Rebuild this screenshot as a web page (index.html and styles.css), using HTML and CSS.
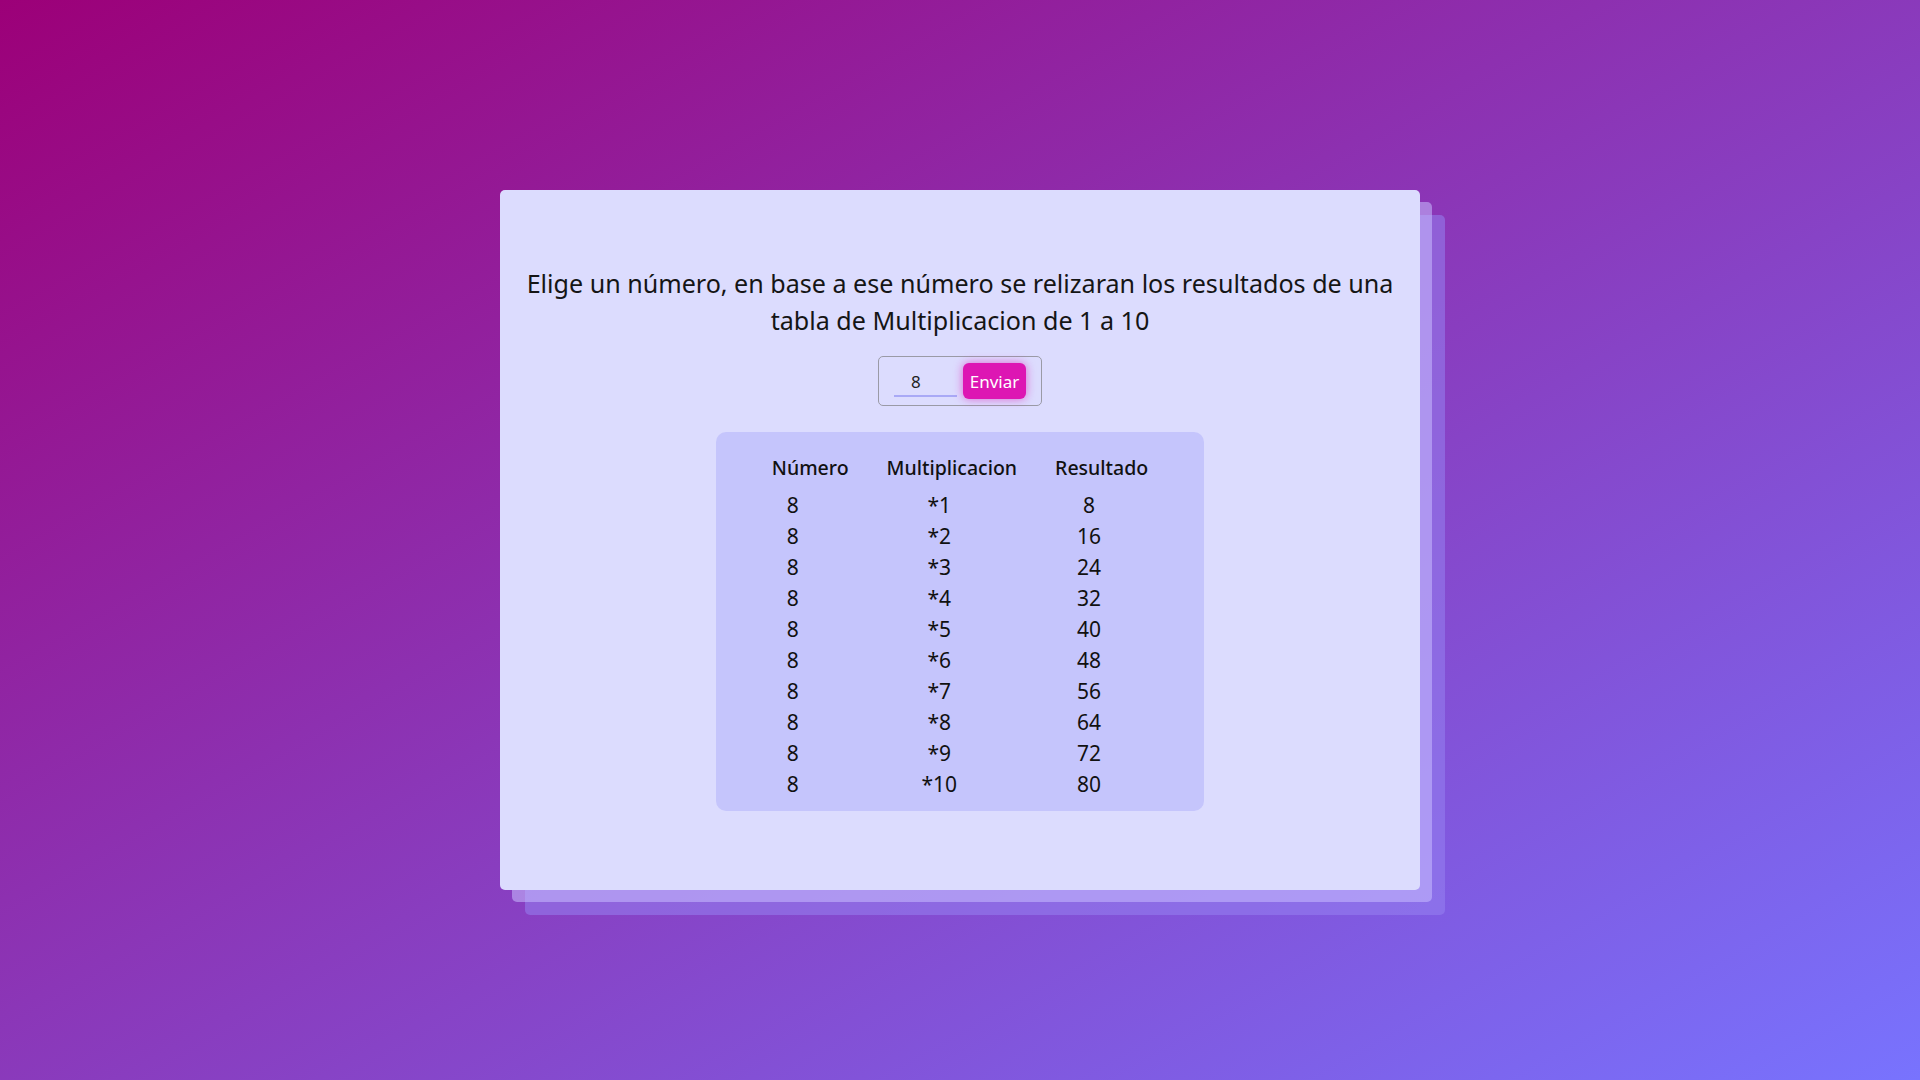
FILE: index.html
```html
<!DOCTYPE html>
<html lang="es">
<head>
<meta charset="utf-8">
<title>Tabla de Multiplicacion</title>
<link rel="stylesheet" href="styles.css">
</head>
<body>
<main class="page">
  <section class="card">
    <p class="intro">Elige un número, en base a ese número se relizaran los resultados de una tabla de Multiplicacion de 1 a 10</p>
    <form class="picker">
      <input class="num-input" type="text" value="8">
      <button class="send" type="button">Enviar</button>
    </form>
    <div class="table-box">
      <table class="mult">
        <thead>
          <tr><th>Número</th><th>Multiplicacion</th><th>Resultado</th></tr>
        </thead>
        <tbody>
          <tr><td>8</td><td>*1</td><td>8</td></tr>
          <tr><td>8</td><td>*2</td><td>16</td></tr>
          <tr><td>8</td><td>*3</td><td>24</td></tr>
          <tr><td>8</td><td>*4</td><td>32</td></tr>
          <tr><td>8</td><td>*5</td><td>40</td></tr>
          <tr><td>8</td><td>*6</td><td>48</td></tr>
          <tr><td>8</td><td>*7</td><td>56</td></tr>
          <tr><td>8</td><td>*8</td><td>64</td></tr>
          <tr><td>8</td><td>*9</td><td>72</td></tr>
          <tr><td>8</td><td>*10</td><td>80</td></tr>
        </tbody>
      </table>
    </div>
  </section>
</main>
</body>
</html>
```
FILE: styles.css
```css
* { box-sizing: border-box; }
html, body { margin: 0; height: 100%; }
body {
  font-family: "Noto Sans", "Open Sans", sans-serif;
  background: linear-gradient(to bottom right, #9c0078, #7873fe);
  color: #111;
}
.page {
  height: 100%;
  display: flex;
  align-items: center;
  justify-content: center;
}
.card {
  width: 920px;
  height: 700px;
  background: #dcdcfe;
  border-radius: 5px;
  box-shadow: 12px 12px 0 rgba(200, 190, 255, 0.55), 25px 25px 0 rgba(150, 130, 240, 0.55);
  display: flex;
  flex-direction: column;
  align-items: center;
  padding: 75px 20px 0;
}
.intro {
  margin: 0;
  font-size: 25.1px;
  line-height: 37px;
  text-align: center;
  color: #151515;
}
.picker {
  margin-top: 17px;
  width: 164px;
  height: 50px;
  border: 1px solid #9a9aa6;
  border-radius: 5px;
  display: flex;
  align-items: center;
  padding: 0 0 0 15px;
  gap: 6px;
}
.num-input {
  width: 63px;
  height: 30px;
  border: none;
  border-bottom: 2px solid #a9a9f6;
  background: transparent;
  font-family: inherit;
  font-size: 17px;
  color: #222;
  padding: 0 0 0 17px;
  outline: none;
  margin-top: 2px;
}
.send {
  width: 63px;
  height: 36px;
  border: none;
  border-radius: 6px;
  background: #dd16b3;
  color: #fff;
  font-family: inherit;
  font-size: 17px;
  padding: 0;
  box-shadow: 0 0 10px rgba(221, 22, 179, 0.6);
}
.table-box {
  margin-top: 26px;
  width: 488px;
  height: 379px;
  background: #c5c5fc;
  border-radius: 10px;
  display: flex;
  justify-content: center;
  padding-top: 21px;
}
.mult {
  border-collapse: collapse;
  height: fit-content;
}
.mult th {
  font-size: 19.5px;
  font-weight: 500;
  padding: 0 19px 7px;
  line-height: 30px;
}
.mult td {
  font-size: 21px;
  text-align: center;
  line-height: 31px;
  padding: 0 25px 0 0;
}
.mult td:first-child { padding-right: 35px; }
```
